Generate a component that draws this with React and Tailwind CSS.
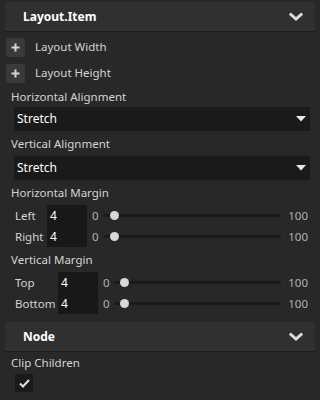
import React from "react";

const font = { fontFamily: '"Noto Sans", "Open Sans", sans-serif' };

function Chevron() {
  return (
    <svg width="14" height="10" viewBox="0 0 14 10" className="block">
      <path d="M2 2.5 L7 7 L12 2.5" fill="none" stroke="#dcdcdc" strokeWidth="3" strokeLinecap="square" strokeLinejoin="miter" />
    </svg>
  );
}

function Header({ title }) {
  return (
    <div className="mx-[5px] h-[30px] bg-[#303030] border-b border-[#1c1c1c] flex items-center pl-[18px] pr-[12px]">
      <span className="text-[12px] font-bold text-white flex-1 leading-none">{title}</span>
      <Chevron />
    </div>
  );
}

function PlusRow({ label }) {
  return (
    <div className="h-[26px] flex items-center pl-[6px]">
      <div className="w-[19px] h-[19px] rounded-[2px] bg-[#3a3a3a] flex items-center justify-center">
        <svg width="9" height="9" viewBox="0 0 9 9">
          <path d="M4.5 0.5 V8.5 M0.5 4.5 H8.5" stroke="#d6d6d6" strokeWidth="2" />
        </svg>
      </div>
      <span className="ml-[10px] text-[11.5px] text-[#d4d4d4]">{label}</span>
    </div>
  );
}

function Label({ children, h = "h-[22px]" }) {
  return (
    <div className={`${h} flex items-center pl-[11px] text-[11.5px] text-[#d4d4d4]`}>{children}</div>
  );
}

function Select() {
  return (
    <div className="ml-[14px] mr-[10px] h-[24px] bg-[#1a1a1a] flex items-center pl-[3px] pr-[4px]">
      <span className="flex-1 text-[12px] text-white">Stretch</span>
      <svg width="10" height="6" viewBox="0 0 10 6">
        <path d="M0 0 H10 L5 5.5 Z" fill="#e6e6e6" />
      </svg>
    </div>
  );
}

function SliderRow({ label, labelW, thumb }) {
  return (
    <div className="h-[21px] flex items-center pr-[12px]">
      <span className={`${labelW} pl-[15px] text-[11.5px] text-[#d4d4d4]`}>{label}</span>
      <div className="w-[40px] h-[21px] bg-[#181818] flex items-center pl-[3px] text-[12px] text-white">4</div>
      <span className="ml-[5px] text-[11.5px] text-[#aab2ba]">0</span>
      <div className="ml-[4px] flex-1 h-[3px] rounded-full bg-[#1a1a1a] relative">
        <div className={`absolute top-[-3px] ${thumb} w-[9px] h-[9px] rounded-full bg-[#d8d8d8]`} />
      </div>
      <span className="ml-[7px] text-[11.5px] text-[#aab2ba]">100</span>
    </div>
  );
}

export default function App() {
  return (
    <div className="w-[320px] h-[400px] bg-[#282828] overflow-hidden pt-[2px]" style={font}>
      <Header title="Layout.Item" />
      <div className="h-[2px]" />
      <PlusRow label="Layout Width" />
      <PlusRow label="Layout Height" />
      <Label h="h-[21px]">Horizontal Alignment</Label>
      <Select />
      <Label h="h-[25px]">Vertical Alignment</Label>
      <Select />
      <Label h="h-[25px]">Horizontal Margin</Label>
      <SliderRow label="Left" labelW="w-[47px]" thumb="left-[7px]" />
      <SliderRow label="Right" labelW="w-[47px]" thumb="left-[7px]" />
      <Label h="h-[25px]">Vertical Margin</Label>
      <SliderRow label="Top" labelW="w-[58px]" thumb="left-[6px]" />
      <SliderRow label="Bottom" labelW="w-[58px]" thumb="left-[6px]" />
      <div className="h-[8px]" />
      <Header title="Node" />
      <Label h="h-[22px]">Clip Children</Label>
      <div className="pl-[15px]">
        <div className="w-[18px] h-[18px] bg-[#1a1a1a] flex items-center justify-center">
          <svg width="11" height="9" viewBox="0 0 11 9">
            <path d="M1 4.5 L4 7.5 L10 1" fill="none" stroke="#e0e0e0" strokeWidth="2" />
          </svg>
        </div>
      </div>
    </div>
  );
}
